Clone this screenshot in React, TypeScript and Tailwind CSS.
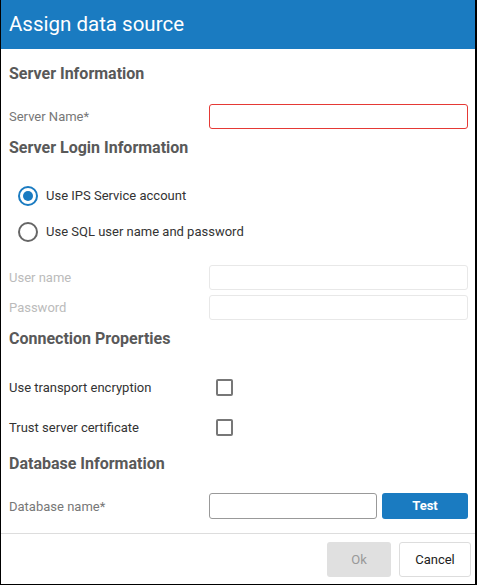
import React from "react";

export default function App() {
  const font = { fontFamily: "Roboto, 'Liberation Sans', sans-serif" };
  return (
    <div
      style={font}
      className="w-[477px] h-[585px] bg-white border-l border-r-2 border-b border-black flex flex-col box-border"
    >
      <div className="h-[49px] shrink-0 bg-[#1a7bc1] flex items-center pl-[8px]">
        <span className="text-white text-[20.5px] leading-none">Assign data source</span>
      </div>
      <div className="flex flex-col pl-[8px] pr-[7px] flex-1">
        <div className="h-[49px] pt-[1px] flex items-center">
          <span className="text-[16px] font-bold text-[#595959]">Server Information</span>
        </div>
        <div className="mt-[6px] h-[25px] flex items-center">
          <span className="w-[200px] pt-[1px] text-[13px] text-[#777]">Server Name*</span>
          <div className="flex-1 h-[25px] border border-[#e53935] rounded-[3px]" />
        </div>
        <div className="mt-[7px] h-[22px] pt-[1px] flex items-center">
          <span className="text-[16px] font-bold text-[#595959]">Server Login Information</span>
        </div>
        <div className="mt-[19px] h-[36px] pt-[1px] flex items-center pl-[9px]">
          <span className="w-[20px] h-[20px] rounded-full border-2 border-[#1a7bc1] flex items-center justify-center box-border">
            <span className="w-[10px] h-[10px] rounded-full bg-[#1a7bc1]" />
          </span>
          <span className="ml-[8px] text-[13px] text-[#333]">Use IPS Service account</span>
        </div>
        <div className="h-[36px] pt-[1px] flex items-center pl-[9px]">
          <span className="w-[20px] h-[20px] rounded-full border-2 border-[#666] box-border" />
          <span className="ml-[8px] text-[13px] text-[#333]">Use SQL user name and password</span>
        </div>
        <div className="mt-[16px] h-[25px] flex items-center">
          <span className="w-[200px] pt-[1px] text-[13px] text-[#bbb]">User name</span>
          <div className="flex-1 h-[25px] border border-[#e8e8e8] rounded-[3px]" />
        </div>
        <div className="mt-[5px] h-[25px] flex items-center">
          <span className="w-[200px] pt-[1px] text-[13px] text-[#bbb]">Password</span>
          <div className="flex-1 h-[25px] border border-[#e8e8e8] rounded-[3px]" />
        </div>
        <div className="mt-[7px] h-[22px] pt-[1px] flex items-center">
          <span className="text-[16px] font-bold text-[#595959]">Connection Properties</span>
        </div>
        <div className="mt-[18px] h-[40px] flex items-center">
          <span className="w-[207px] pt-[1px] text-[13px] text-[#333]">Use transport encryption</span>
          <span className="w-[17px] h-[17px] border-2 border-[#777] rounded-[2px] box-border" />
        </div>
        <div className="h-[40px] flex items-center">
          <span className="w-[207px] pt-[1px] text-[13px] text-[#333]">Trust server certificate</span>
          <span className="w-[17px] h-[17px] border-2 border-[#777] rounded-[2px] box-border" />
        </div>
        <div className="mt-[5px] h-[22px] pt-[1px] flex items-center">
          <span className="text-[16px] font-bold text-[#595959]">Database Information</span>
        </div>
        <div className="mt-[19px] h-[26px] flex items-center">
          <span className="w-[200px] pt-[1px] text-[13px] text-[#777]">Database name*</span>
          <div className="w-[168px] h-[26px] border border-[#999] rounded-[3px]" />
          <div className="ml-[5px] flex-1 h-[26px] bg-[#1a7bc1] rounded-[3px] flex items-center justify-center">
            <span className="text-white text-[13px] font-bold">Test</span>
          </div>
        </div>
      </div>
      <div className="h-[51px] shrink-0 border-t border-[#ddd] flex items-start justify-end pt-[8px] pr-[4px] gap-[8px]">
        <div className="w-[64px] h-[35px] bg-[#e0e0e0] rounded-[3px] flex items-center justify-center">
          <span className="text-[13px] text-[#999]">Ok</span>
        </div>
        <div className="w-[72px] h-[35px] bg-white border border-[#ddd] rounded-[3px] flex items-center justify-center">
          <span className="text-[13px] text-[#222]">Cancel</span>
        </div>
      </div>
    </div>
  );
}
